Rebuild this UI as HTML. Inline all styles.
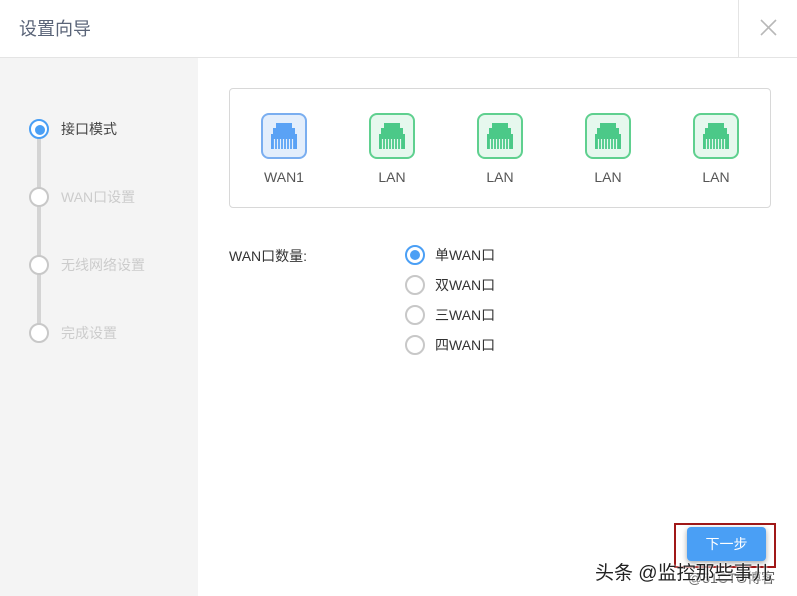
<!DOCTYPE html>
<html><head><meta charset="utf-8"><style>
body{margin:0;width:797px;height:596px;background:#fff;font-family:"Liberation Sans","Noto Sans CJK SC",sans-serif;position:relative;overflow:hidden}
.a{position:absolute}
.hdr{left:0;top:0;width:797px;height:57px;border-bottom:1px solid #e4e4e4}
.side{left:0;top:58px;width:198px;height:538px;background:#f4f4f4}
.step{font-size:14px;color:#ccc;left:61px}
.circ{width:16px;height:16px;border:2px solid #c8c8c8;border-radius:50%;background:#fff;left:29px}
.lbl{font-size:14px;color:#555;width:60px;text-align:center}
.rad{width:16px;height:16px;border:2px solid #c8c8c8;border-radius:50%;left:405px;background:#fff}
.ro{font-size:14px;color:#333;left:435px}
</style></head><body>
<div class="a hdr"></div>
<div class="a" style="left:19px;top:15px;font-size:18px;color:#5a6478">设置向导</div>
<div class="a" style="left:738px;top:0;width:1px;height:57px;background:#e4e4e4"></div>
<svg class="a" style="left:760px;top:19px" width="17" height="17"><path d="M1 1L16 16M16 1L1 16" stroke="#b8b8b8" stroke-width="1.6"/></svg>
<div class="a side"></div>
<div class="a" style="left:37px;top:136px;width:4px;height:196px;background:#d4d4d4"></div>
<div class="a circ" style="top:119px;border-color:#4a9ff5"></div>
<div class="a" style="left:35px;top:125px;width:10px;height:10px;border-radius:50%;background:#4a9ff5"></div>
<div class="a step" style="top:119px;color:#444">接口模式</div>
<div class="a circ" style="top:187px"></div><div class="a step" style="top:187px">WAN口设置</div>
<div class="a circ" style="top:255px"></div><div class="a step" style="top:255px">无线网络设置</div>
<div class="a circ" style="top:323px"></div><div class="a step" style="top:323px">完成设置</div>
<div class="a" style="left:229px;top:88px;width:540px;height:118px;border:1px solid #d8d8d8;border-radius:4px"></div>
<svg class="a" style="left:261px;top:113px" width="46" height="46"><rect x="1" y="1" width="44" height="44" rx="7" fill="#e3eefc" stroke="#7aaef0" stroke-width="2"/><rect x="15" y="10" width="16" height="5" fill="#5aa2f5"/><rect x="12" y="15" width="22" height="6" fill="#5aa2f5"/><rect x="10" y="21" width="26" height="15" fill="#5aa2f5"/><path d="M13.5 26V36M16.5 26V36M19.5 26V36M22.5 26V36M25.5 26V36M28.5 26V36M31.5 26V36" stroke="#e3eefc" stroke-width="1.2"/></svg>
<svg class="a" style="left:369px;top:113px" width="46" height="46"><rect x="1" y="1" width="44" height="44" rx="7" fill="#e6f8ee" stroke="#5fd08f" stroke-width="2"/><rect x="15" y="10" width="16" height="5" fill="#4bc988"/><rect x="12" y="15" width="22" height="6" fill="#4bc988"/><rect x="10" y="21" width="26" height="15" fill="#4bc988"/><path d="M13.5 26V36M16.5 26V36M19.5 26V36M22.5 26V36M25.5 26V36M28.5 26V36M31.5 26V36" stroke="#e6f8ee" stroke-width="1.2"/></svg>
<svg class="a" style="left:477px;top:113px" width="46" height="46"><rect x="1" y="1" width="44" height="44" rx="7" fill="#e6f8ee" stroke="#5fd08f" stroke-width="2"/><rect x="15" y="10" width="16" height="5" fill="#4bc988"/><rect x="12" y="15" width="22" height="6" fill="#4bc988"/><rect x="10" y="21" width="26" height="15" fill="#4bc988"/><path d="M13.5 26V36M16.5 26V36M19.5 26V36M22.5 26V36M25.5 26V36M28.5 26V36M31.5 26V36" stroke="#e6f8ee" stroke-width="1.2"/></svg>
<svg class="a" style="left:585px;top:113px" width="46" height="46"><rect x="1" y="1" width="44" height="44" rx="7" fill="#e6f8ee" stroke="#5fd08f" stroke-width="2"/><rect x="15" y="10" width="16" height="5" fill="#4bc988"/><rect x="12" y="15" width="22" height="6" fill="#4bc988"/><rect x="10" y="21" width="26" height="15" fill="#4bc988"/><path d="M13.5 26V36M16.5 26V36M19.5 26V36M22.5 26V36M25.5 26V36M28.5 26V36M31.5 26V36" stroke="#e6f8ee" stroke-width="1.2"/></svg>
<svg class="a" style="left:693px;top:113px" width="46" height="46"><rect x="1" y="1" width="44" height="44" rx="7" fill="#e6f8ee" stroke="#5fd08f" stroke-width="2"/><rect x="15" y="10" width="16" height="5" fill="#4bc988"/><rect x="12" y="15" width="22" height="6" fill="#4bc988"/><rect x="10" y="21" width="26" height="15" fill="#4bc988"/><path d="M13.5 26V36M16.5 26V36M19.5 26V36M22.5 26V36M25.5 26V36M28.5 26V36M31.5 26V36" stroke="#e6f8ee" stroke-width="1.2"/></svg>
<div class="a lbl" style="left:254px;top:169px">WAN1</div>
<div class="a lbl" style="left:362px;top:169px">LAN</div>
<div class="a lbl" style="left:470px;top:169px">LAN</div>
<div class="a lbl" style="left:578px;top:169px">LAN</div>
<div class="a lbl" style="left:686px;top:169px">LAN</div>
<div class="a" style="left:229px;top:246px;font-size:14px;color:#333">WAN口数量:</div>
<div class="a rad" style="top:245px;border-color:#4a9ff5"></div>
<div class="a" style="left:410px;top:250px;width:10px;height:10px;border-radius:50%;background:#4a9ff5"></div>
<div class="a ro" style="top:245px">单WAN口</div>
<div class="a rad" style="top:275px"></div><div class="a ro" style="top:275px">双WAN口</div>
<div class="a rad" style="top:305px"></div><div class="a ro" style="top:305px">三WAN口</div>
<div class="a rad" style="top:335px"></div><div class="a ro" style="top:335px">四WAN口</div>
<div class="a" style="left:674px;top:523px;width:98px;height:41px;border:2px solid #a01818"></div>
<div class="a" style="left:687px;top:527px;width:79px;height:34px;background:#4a9ff5;border-radius:4px;box-shadow:0 2px 6px rgba(0,0,0,.35);color:#fff;font-size:14px;text-align:center;line-height:34px">下一步</div>
<div class="a" style="left:688px;top:568px;font-size:14px;color:#666">@51CTO博客</div>
<div class="a" style="left:595px;top:558px;font-size:19px;color:#222;text-shadow:0 0 2px #fff,0 0 2px #fff">头条 @监控那些事儿</div>
</body></html>
